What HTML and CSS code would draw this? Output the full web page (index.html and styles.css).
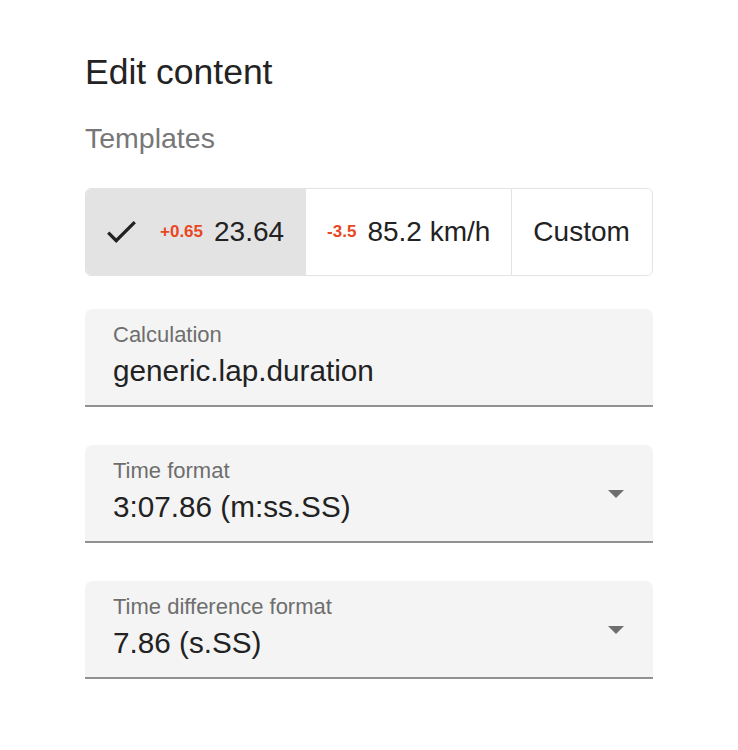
FILE: index.html
```html
<!DOCTYPE html>
<html lang="en">
<head>
    <meta charset="UTF-8">
    <meta name="viewport" content="width=device-width, initial-scale=1.0">
    <title>Edit content</title>
    <link rel="stylesheet" href="styles.css">
</head>
<body>
    <div class="panel">
        <h1 class="title">Edit content</h1>
        <h2 class="subtitle">Templates</h2>

        <div class="toggle-group">
            <button class="toggle selected">
                <svg class="check" viewBox="3.41 5.59 17.59 13.41" width="29" height="22">
                    <path d="M9 16.17L4.83 12l-1.42 1.41L9 19 21 7l-1.41-1.41z" fill="#222"/>
                </svg>
                <span class="delta">+0.65</span>
                <span class="value">23.64</span>
            </button>
            <button class="toggle">
                <span class="delta">-3.5</span>
                <span class="value">85.2 km/h</span>
            </button>
            <button class="toggle">
                <span class="value">Custom</span>
            </button>
        </div>

        <div class="field">
            <div class="field-label">Calculation</div>
            <div class="field-value">generic.lap.duration</div>
        </div>

        <div class="field select">
            <div class="field-label">Time format</div>
            <div class="field-value">3:07.86 (m:ss.SS)</div>
            <svg class="arrow" viewBox="0 0 16 8" width="16" height="8">
                <polygon points="0,0 16,0 8,8" fill="#6e6e6e"/>
            </svg>
        </div>

        <div class="field select">
            <div class="field-label">Time difference format</div>
            <div class="field-value">7.86 (s.SS)</div>
            <svg class="arrow" viewBox="0 0 16 8" width="16" height="8">
                <polygon points="0,0 16,0 8,8" fill="#6e6e6e"/>
            </svg>
        </div>
    </div>
</body>
</html>
```

FILE: styles.css
```css
body {
    margin: 0;
    background: #fff;
    font-family: "Liberation Sans", Arial, sans-serif;
    color: #222;
}
.panel {
    width: 568px;
    padding: 52px 85px;
}
.title {
    margin: 0;
    font-size: 35.5px;
    line-height: 40px;
    font-weight: normal;
    color: #232323;
}
.subtitle {
    margin: 29px 0 0;
    font-size: 28.5px;
    line-height: 34px;
    font-weight: normal;
    color: #777;
}
.toggle-group {
    margin-top: 33px;
    display: flex;
    height: 88px;
    border: 1px solid #e3e3e3;
    border-radius: 6px;
    overflow: hidden;
    box-sizing: border-box;
}
.toggle {
    display: flex;
    align-items: center;
    gap: 11px;
    padding: 0 21px;
    border: none;
    border-left: 1px solid #e3e3e3;
    background: #fff;
    font-family: inherit;
    color: #222;
}
.toggle:first-child {
    border-left: none;
}
.toggle.selected {
    background: #e3e3e3;
}
.check {
    margin-right: 13px;
}
.delta {
    font-size: 17px;
    font-weight: bold;
    color: #e8471f;
}
.value {
    font-size: 28px;
}
.field {
    position: relative;
    margin-top: 33px;
    height: 98px;
    box-sizing: border-box;
    padding: 13px 28px 0;
    background: #f4f4f4;
    border-radius: 7px 7px 0 0;
    border-bottom: 2px solid #919191;
}
.field + .field {
    margin-top: 38px;
}
.field-label {
    font-size: 22px;
    line-height: 26px;
    color: #6e6e6e;
}
.field-value {
    margin-top: 6px;
    font-size: 29.7px;
    line-height: 34px;
    color: #222;
}
.arrow {
    position: absolute;
    right: 29px;
    top: 45px;
}
```
